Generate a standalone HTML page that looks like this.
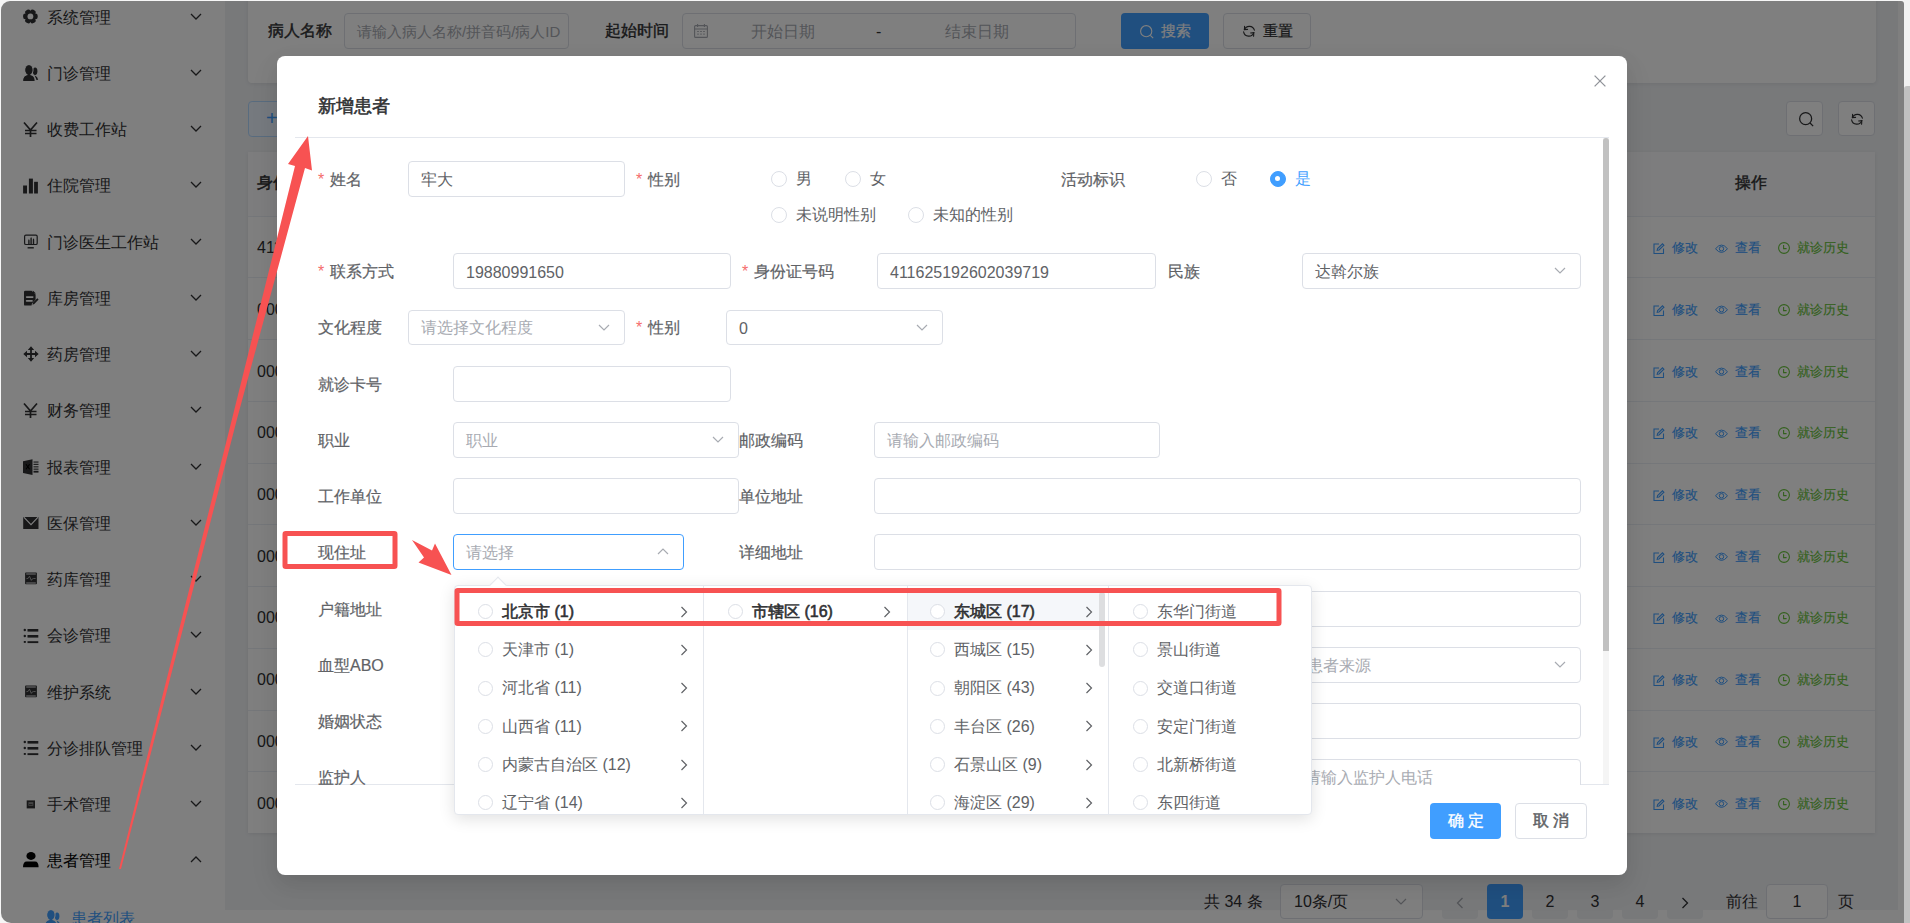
<!DOCTYPE html><html><head><meta charset="utf-8"><style>
*{box-sizing:border-box;margin:0;padding:0}
html,body{width:1910px;height:923px;overflow:hidden;background:#f3f3f3;font-family:"Liberation Sans",sans-serif;color:#303133}
.ab{position:absolute}
#win{position:absolute;left:0;top:0;width:1904px;height:923px;overflow:hidden;background:#f0f2f5}
.frame{position:absolute;left:1px;top:1px;width:1903px;height:922px;border-radius:9px 3px 0 10px;box-shadow:0 0 0 30px #f6f6f6;pointer-events:none}
.side{position:absolute;left:0;top:0;width:225px;height:923px;background:#fff}
.mi{position:absolute;left:0;width:224px;height:56px;font-size:16px;line-height:56px;color:#303133}
.mi .ic{position:absolute;left:22px;top:20px;width:16px;height:16px}
.mi .tx{position:absolute;left:47px;top:.5px}
.mi .ch{position:absolute;left:190px;top:23px;width:12px;height:10px}
.card{position:absolute;background:#fff;border-radius:4px;box-shadow:0 1px 4px rgba(0,0,0,.08)}
.lbl{position:absolute;font-size:16px;line-height:20px;color:#606266;font-weight:400;-webkit-text-stroke:.2px currentColor;white-space:nowrap}
.inp{position:absolute;border:1px solid #dcdfe6;border-radius:4px;background:#fff;font-size:16px;color:#606266;white-space:nowrap;overflow:hidden}
.inp span{position:absolute;left:12px;top:50%;transform:translateY(-50%);line-height:20px;margin-top:.6px}
.ph{color:#a8abb2}
.req{color:#f56c6c;margin-right:6px;-webkit-text-stroke:0}
.row{position:absolute;left:248px;width:1627px;border-top:1px solid #ebeef5;background:#fff}
.radio{position:absolute;width:16px;height:16px;border:1px solid #dcdfe6;border-radius:50%;background:#fff}
.rl{position:absolute;font-size:16px;line-height:20px;color:#606266;white-space:nowrap}
.cn{position:absolute;height:38px;font-size:16px;line-height:38px;color:#606266;white-space:nowrap}
</style></head><body>
<div id="win">
<div class="side">
<div class="mi" style="top:-11px;color:#303133">
<svg class="ab" style="left:23px;top:19.4px" width="16" height="16" viewBox="0 0 16 16"><g transform="translate(-0.6 0.4)"><g fill="#303133"><rect x="5.2" y="0.7" width="5.6" height="14.6" rx="2.2" transform="rotate(30 8 8)"/><rect x="5.2" y="0.7" width="5.6" height="14.6" rx="2.2" transform="rotate(90 8 8)"/><rect x="5.2" y="0.7" width="5.6" height="14.6" rx="2.2" transform="rotate(150 8 8)"/><circle cx="8" cy="8" r="5.2"/></g><circle cx="8" cy="8" r="2.9" fill="#fff"/></g></svg>
<div class="tx">系统管理</div>
<svg class="ch" viewBox="0 0 12 10"><path d="M1 2 L6 7 L11 2" fill="none" stroke="#303133" stroke-width="1.3"/></svg>
</div>
<div class="mi" style="top:45px;color:#303133">
<svg class="ab" style="left:23px;top:20.0px" width="16" height="16" viewBox="0 0 16 16"><g fill="#303133"><ellipse cx="12.1" cy="6.3" rx="2.3" ry="3.7"/><path d="M11.5 10.2 Q14.6 11.5 15.2 14.8 L13.5 15 Z"/></g><g fill="#303133" stroke="#fff" stroke-width="1.3"><path d="M-0.3 16.2 Q-0.3 10 5.9 9.6 Q12.1 10 12.1 16.2 Z"/><ellipse cx="5.9" cy="4.9" rx="4" ry="5"/></g><g fill="#303133"><path d="M0.2 15.9 Q0.2 10.4 5.9 10.1 Q11.6 10.4 11.6 15.9 Z"/><ellipse cx="5.9" cy="4.9" rx="3.6" ry="4.7"/><rect x="4.5" y="8" width="2.8" height="3"/></g></svg>
<div class="tx">门诊管理</div>
<svg class="ch" viewBox="0 0 12 10"><path d="M1 2 L6 7 L11 2" fill="none" stroke="#303133" stroke-width="1.3"/></svg>
</div>
<div class="mi" style="top:101px;color:#303133">
<svg class="ab" style="left:23px;top:19.5px" width="16" height="16" viewBox="0 0 16 16"><path d="M1 1.5 L7.5 9 L14 1.5 M7.5 9 V16 M2 9.5 H13.5 M2 12.5 H13.5" fill="none" stroke="#303133" stroke-width="1.7"/></svg>
<div class="tx">收费工作站</div>
<svg class="ch" viewBox="0 0 12 10"><path d="M1 2 L6 7 L11 2" fill="none" stroke="#303133" stroke-width="1.3"/></svg>
</div>
<div class="mi" style="top:157px;color:#303133">
<svg class="ab" style="left:23px;top:20.5px" width="16" height="16" viewBox="0 0 16 16"><g fill="#303133"><rect x="0.1" y="7.5" width="3.9" height="8"/><rect x="5.9" y="0.6" width="4" height="14.9"/><rect x="11.1" y="3.8" width="3.8" height="11.7"/></g></svg>
<div class="tx">住院管理</div>
<svg class="ch" viewBox="0 0 12 10"><path d="M1 2 L6 7 L11 2" fill="none" stroke="#303133" stroke-width="1.3"/></svg>
</div>
<div class="mi" style="top:214px;color:#303133">
<svg class="ab" style="left:23px;top:19.7px" width="16" height="16" viewBox="0 0 16 16"><g fill="none" stroke="#303133" stroke-width="1.2"><rect x="1.6" y="1.1" width="12.6" height="9.4" rx="1.3"/><path d="M4.6 13.8 H10.8" stroke-width="1.4"/></g><g fill="#303133"><path d="M5.2 10.2 V6.5 L5.9 5 L6.6 6.5 V10.2Z M7.4 10.2 V4.2 L8.1 3 L8.8 4.2 V10.2Z M9.8 10.2 V5.5 L10.5 4.2 L11.2 5.5 V10.2Z"/></g></svg>
<div class="tx">门诊医生工作站</div>
<svg class="ch" viewBox="0 0 12 10"><path d="M1 2 L6 7 L11 2" fill="none" stroke="#303133" stroke-width="1.3"/></svg>
</div>
<div class="mi" style="top:270px;color:#303133">
<svg class="ab" style="left:23px;top:19.5px" width="16" height="16" viewBox="0 0 16 16"><g fill="#303133"><path d="M1 2 Q1 0.8 2.2 0.8 L8.6 0.8 L12.6 4.6 L12.6 9.6 L9 13.5 L8.5 15.6 L2.2 15.6 Q1 15.6 1 14.4 Z"/><path d="M9.8 0.5 L13 3.6 L9.8 3.6 Z"/><path d="M9.5 14.8 L10 12.6 L14.3 8.3 L15.6 9.6 L11.3 13.9 Z"/></g><g fill="#fff"><rect x="2.8" y="6.2" width="7.8" height="1.7" rx=".8"/><rect x="2.8" y="10" width="7" height="1.7" rx=".8"/></g></svg>
<div class="tx">库房管理</div>
<svg class="ch" viewBox="0 0 12 10"><path d="M1 2 L6 7 L11 2" fill="none" stroke="#303133" stroke-width="1.3"/></svg>
</div>
<div class="mi" style="top:326px;color:#303133">
<svg class="ab" style="left:23px;top:19.6px" width="16" height="16" viewBox="0 0 16 16"><g fill="#303133"><path d="M8 0.3 L11.2 4 L8.9 4 L8.9 7.1 L12 7.1 L12 4.8 L15.7 8 L12 11.2 L12 8.9 L8.9 8.9 L8.9 12 L11.2 12 L8 15.7 L4.8 12 L7.1 12 L7.1 8.9 L4 8.9 L4 11.2 L0.3 8 L4 4.8 L4 7.1 L7.1 7.1 L7.1 4 L4.8 4 Z"/></g></svg>
<div class="tx">药房管理</div>
<svg class="ch" viewBox="0 0 12 10"><path d="M1 2 L6 7 L11 2" fill="none" stroke="#303133" stroke-width="1.3"/></svg>
</div>
<div class="mi" style="top:382px;color:#303133">
<svg class="ab" style="left:23px;top:20.0px" width="16" height="16" viewBox="0 0 16 16"><path d="M1 1.5 L7.5 9 L14 1.5 M7.5 9 V16 M2 9.5 H13.5 M2 12.5 H13.5" fill="none" stroke="#303133" stroke-width="1.7"/></svg>
<div class="tx">财务管理</div>
<svg class="ch" viewBox="0 0 12 10"><path d="M1 2 L6 7 L11 2" fill="none" stroke="#303133" stroke-width="1.3"/></svg>
</div>
<div class="mi" style="top:439px;color:#303133">
<svg class="ab" style="left:23px;top:19.8px" width="16" height="16" viewBox="0 0 16 16"><g fill="#303133"><path d="M0 2.2 L9.5 0.2 L9.5 16 L0 14 Z"/><rect x="10.5" y="2.5" width="5" height="1.1"/><rect x="10.5" y="4.8" width="5" height="1.1"/><rect x="10.5" y="7.3" width="5" height="1.1"/><rect x="10.5" y="9.6" width="5" height="1.1"/><rect x="10.5" y="11.8" width="5" height="1.8"/></g><path d="M3 5.2 L6.6 10.2 M6.6 5.2 L3 10.2" stroke="#000" stroke-width="1.1"/></svg>
<div class="tx">报表管理</div>
<svg class="ch" viewBox="0 0 12 10"><path d="M1 2 L6 7 L11 2" fill="none" stroke="#303133" stroke-width="1.3"/></svg>
</div>
<div class="mi" style="top:495px;color:#303133">
<svg class="ab" style="left:23px;top:19.8px" width="16" height="16" viewBox="0 0 16 16"><path d="M0.2 2 L15.5 2 L15.5 14 L0.2 14 Z" fill="#303133"/><path d="M0.8 2.2 L8 9.6 L15.1 2.2" fill="none" stroke="#fff" stroke-width="1.1"/></svg>
<div class="tx">医保管理</div>
<svg class="ch" viewBox="0 0 12 10"><path d="M1 2 L6 7 L11 2" fill="none" stroke="#303133" stroke-width="1.3"/></svg>
</div>
<div class="mi" style="top:551px;color:#303133">
<svg class="ab" style="left:23px;top:19.9px" width="16" height="16" viewBox="0 0 16 16"><rect x="2.1" y="1.6" width="11.8" height="11.7" rx="0.8" fill="#303133"/><g fill="none" stroke="#fff" stroke-width=".9"><path d="M3.2 3 H12.8 M3.2 12 H12.8"/><path d="M3.4 7.7 L5.2 7.3 L6.5 5.2 L8.3 9.4 L9.2 8 L10.5 7.5 L12.6 7.5" stroke="#aaa"/></g></svg>
<div class="tx">药库管理</div>
<svg class="ch" viewBox="0 0 12 10"><path d="M1 2 L6 7 L11 2" fill="none" stroke="#303133" stroke-width="1.3"/></svg>
</div>
<div class="mi" style="top:607px;color:#303133">
<svg class="ab" style="left:23px;top:20.5px" width="16" height="16" viewBox="0 0 16 16"><g fill="#303133"><circle cx="1.8" cy="2" r="1.2"/><circle cx="1.8" cy="8" r="1.2"/><rect x="0.8" y="13" width="2" height="1.9"/><rect x="4.5" y="1" width="10.8" height="2.6"/><rect x="4.5" y="7" width="10.8" height="2.6"/><rect x="4.5" y="13.2" width="10.8" height="1.9"/></g></svg>
<div class="tx">会诊管理</div>
<svg class="ch" viewBox="0 0 12 10"><path d="M1 2 L6 7 L11 2" fill="none" stroke="#303133" stroke-width="1.3"/></svg>
</div>
<div class="mi" style="top:664px;color:#303133">
<svg class="ab" style="left:23px;top:19.5px" width="16" height="16" viewBox="0 0 16 16"><rect x="2.1" y="1.6" width="11.8" height="11.7" rx="0.8" fill="#303133"/><g fill="none" stroke="#fff" stroke-width=".9"><path d="M3.2 3 H12.8 M3.2 12 H12.8"/><path d="M3.4 7.7 L5.2 7.3 L6.5 5.2 L8.3 9.4 L9.2 8 L10.5 7.5 L12.6 7.5" stroke="#aaa"/></g></svg>
<div class="tx">维护系统</div>
<svg class="ch" viewBox="0 0 12 10"><path d="M1 2 L6 7 L11 2" fill="none" stroke="#303133" stroke-width="1.3"/></svg>
</div>
<div class="mi" style="top:720px;color:#303133">
<svg class="ab" style="left:23px;top:20.0px" width="16" height="16" viewBox="0 0 16 16"><g fill="#303133"><circle cx="1.8" cy="2" r="1.2"/><circle cx="1.8" cy="8" r="1.2"/><rect x="0.8" y="13" width="2" height="1.9"/><rect x="4.5" y="1" width="10.8" height="2.6"/><rect x="4.5" y="7" width="10.8" height="2.6"/><rect x="4.5" y="13.2" width="10.8" height="1.9"/></g></svg>
<div class="tx">分诊排队管理</div>
<svg class="ch" viewBox="0 0 12 10"><path d="M1 2 L6 7 L11 2" fill="none" stroke="#303133" stroke-width="1.3"/></svg>
</div>
<div class="mi" style="top:776px;color:#303133">
<svg class="ab" style="left:23px;top:19.9px" width="16" height="16" viewBox="0 0 16 16"><rect x="3.7" y="4.4" width="8.3" height="8" fill="#303133"/><rect x="5.4" y="6.1" width="4.9" height="3.7" fill="#888"/><rect x="6" y="8" width="3.5" height="1" fill="#444"/></svg>
<div class="tx">手术管理</div>
<svg class="ch" viewBox="0 0 12 10"><path d="M1 2 L6 7 L11 2" fill="none" stroke="#303133" stroke-width="1.3"/></svg>
</div>
<div class="mi" style="top:832px;color:#000">
<svg class="ab" style="left:23px;top:20.4px" width="16" height="16" viewBox="0 0 16 16"><g fill="#000"><ellipse cx="8" cy="4" rx="4.6" ry="3.9"/><path d="M0 15.2 Q0 9.6 3.8 9.6 L12 9.6 Q15.6 9.6 15.6 15.2 Z"/></g></svg>
<div class="tx">患者管理</div>
<svg class="ch" viewBox="0 0 12 10"><path d="M1 7 L6 2 L11 7" fill="none" stroke="#303133" stroke-width="1.3"/></svg>
</div>
<div class="mi" style="top:890px;color:#409eff"><svg class="ab" style="left:45px;top:19.5px" width="16" height="16" viewBox="0 0 16 16"><g fill="#409eff"><ellipse cx="12.1" cy="6.3" rx="2.3" ry="3.7"/><path d="M11.5 10.2 Q14.6 11.5 15.2 14.8 L13.5 15 Z"/></g><g fill="#409eff" stroke="#fff" stroke-width="1.3"><path d="M-0.3 16.2 Q-0.3 10 5.9 9.6 Q12.1 10 12.1 16.2 Z"/><ellipse cx="5.9" cy="4.9" rx="4" ry="5"/></g><g fill="#409eff"><path d="M0.2 15.9 Q0.2 10.4 5.9 10.1 Q11.6 10.4 11.6 15.9 Z"/><ellipse cx="5.9" cy="4.9" rx="3.6" ry="4.7"/><rect x="4.5" y="8" width="2.8" height="3"/></g></svg><div class="tx" style="left:70.5px">患者列表</div></div>
</div>
<div class="card" style="left:248px;top:-20px;width:1628px;height:103px"></div>
<div class="lbl" style="left:268px;top:21px;color:#303133;-webkit-text-stroke:.4px currentColor">病人名称</div>
<div class="inp" style="left:344px;top:13px;width:225px;height:36px"><span class="ph" style="font-size:15px">请输入病人名称/拼音码/病人ID</span></div>
<div class="lbl" style="left:605px;top:21px;color:#303133;-webkit-text-stroke:.4px currentColor">起始时间</div>
<div class="inp" style="left:682px;top:13px;width:394px;height:36px"><span class="ph" style="left:68px">开始日期</span><span style="left:193px;color:#303133">-</span><span class="ph" style="left:262px">结束日期</span></div>
<svg class="ab" style="left:694px;top:24px" width="14" height="14" viewBox="0 0 14 14"><g fill="none" stroke="#a8abb2" stroke-width="1.1"><rect x="0.6" y="1.6" width="12.8" height="11.8" rx="1"/><path d="M0.6 5 H13.4 M3.6 0 V3 M10.4 0 V3"/></g><g fill="#a8abb2"><rect x="3.2" y="7" width="1.6" height="1"/><rect x="6.2" y="7" width="1.6" height="1"/><rect x="9.2" y="7" width="1.6" height="1"/><rect x="3.2" y="9.6" width="1.6" height="1"/><rect x="6.2" y="9.6" width="1.6" height="1"/><rect x="9.2" y="9.6" width="1.6" height="1"/></g></svg>
<div class="ab" style="left:1121px;top:13px;width:88px;height:36px;background:#409eff;border-radius:4px;color:#fff;font-size:15px;line-height:36px;padding-left:40px;-webkit-text-stroke:.2px currentColor;">搜索</div>
<svg class="ab" style="left:1140px;top:24.5px" width="14" height="14" viewBox="0 0 14 14"><g fill="none" stroke="#fff" stroke-width="1.1"><circle cx="6.2" cy="6.2" r="5.6"/><path d="M10.3 10.3 L13.2 13.2"/></g></svg>
<div class="ab" style="left:1223px;top:13px;width:88px;height:36px;background:#fff;border:1px solid #dcdfe6;border-radius:4px;color:#303133;font-size:15px;line-height:34px;padding-left:39px;-webkit-text-stroke:.2px currentColor;">重置</div>
<svg class="ab" style="left:1243px;top:25px" width="12" height="12" viewBox="0 0 12 12"><g fill="none" stroke="#303133" stroke-width="1.1" stroke-linecap="round"><path d="M1.4 4.6 A5.3 5.3 0 0 1 11.4 5.2"/><path d="M10.8 7.6 A5.3 5.3 0 0 1 0.6 6.8"/><path d="M1.6 1.2 L1.4 4.6 L4.6 4.4"/><path d="M10.6 11.2 L10.8 7.6 L7.6 8"/></g></svg>
<div class="ab" style="left:248px;top:101px;width:90px;height:36px;background:#ecf5ff;border:1px solid #b3d8ff;border-radius:4px;color:#409eff;font-size:20px;line-height:32px;padding-left:17px">+</div>
<div class="ab" style="left:1786px;top:101px;width:37px;height:35px;background:#fff;border:1px solid #dcdfe6;border-radius:4px"></div>
<svg class="ab" style="left:1798.5px;top:111.5px" width="15" height="15" viewBox="0 0 14 14"><g fill="none" stroke="#303133" stroke-width="1.2"><circle cx="6.2" cy="6.2" r="5.6"/><path d="M10.3 10.3 L13.2 13.2"/></g></svg>
<div class="ab" style="left:1838px;top:101px;width:37px;height:35px;background:#fff;border:1px solid #dcdfe6;border-radius:4px"></div>
<svg class="ab" style="left:1851px;top:113px" width="12" height="12" viewBox="0 0 12 12"><g fill="none" stroke="#303133" stroke-width="1.1" stroke-linecap="round"><path d="M1.4 4.6 A5.3 5.3 0 0 1 11.4 5.2"/><path d="M10.8 7.6 A5.3 5.3 0 0 1 0.6 6.8"/><path d="M1.6 1.2 L1.4 4.6 L4.6 4.4"/><path d="M10.6 11.2 L10.8 7.6 L7.6 8"/></g></svg>
<div class="card" style="left:248px;top:152px;width:1627px;height:681px;border-radius:0"></div>
<div class="ab" style="left:248px;top:152px;width:1627px;height:65px;background:#fbfbfc"></div>
<div class="lbl" style="left:257px;top:173px;color:#303133;-webkit-text-stroke:.5px currentColor">身份证号</div>
<div class="lbl" style="left:1735px;top:173px;color:#303133;-webkit-text-stroke:.4px currentColor">操作</div>
<div class="row" style="top:215.7px;height:61.7px"></div>
<div class="lbl" style="left:257px;top:238.1px;color:#303133;-webkit-text-stroke:0">411625192602039719</div>
<svg class="ab" style="left:1653px;top:243.1px" width="11.5" height="11" viewBox="0 0 11.5 11"><g fill="none" stroke="#409eff" stroke-width="1.1"><path d="M6 1 H1 V10.5 H10.5 V5.5"/><path d="M4.2 7.3 L4.6 5.6 L9.5 0.8 L10.9 2.2 L6 7 Z"/></g></svg>
<div class="lbl" style="left:1672px;top:238.1px;color:#409eff;font-size:13.3px;-webkit-text-stroke:.15px currentColor">修改</div>
<svg class="ab" style="left:1715px;top:243.6px" width="13" height="9.5" viewBox="0 0 13 9.5"><g fill="none" stroke="#409eff" stroke-width="1"><path d="M0.5 4.75 Q6.5 -2.6 12.5 4.75 Q6.5 12.1 0.5 4.75 Z"/><circle cx="6.5" cy="4.75" r="2.2"/></g></svg>
<div class="lbl" style="left:1735px;top:238.1px;color:#409eff;font-size:13.3px;-webkit-text-stroke:.15px currentColor">查看</div>
<svg class="ab" style="left:1778px;top:242.1px" width="12" height="12" viewBox="0 0 12 12"><g fill="none" stroke="#67c23a" stroke-width="1.1"><circle cx="6" cy="6" r="5.4"/><path d="M5.6 3 V6.6 H8.6"/></g></svg>
<div class="lbl" style="left:1797px;top:238.1px;color:#67c23a;font-size:13.3px;-webkit-text-stroke:.15px currentColor">就诊历史</div>
<div class="row" style="top:277.4px;height:61.7px"></div>
<div class="lbl" style="left:257px;top:299.8px;color:#303133;-webkit-text-stroke:0">000000000000000000</div>
<svg class="ab" style="left:1653px;top:304.8px" width="11.5" height="11" viewBox="0 0 11.5 11"><g fill="none" stroke="#409eff" stroke-width="1.1"><path d="M6 1 H1 V10.5 H10.5 V5.5"/><path d="M4.2 7.3 L4.6 5.6 L9.5 0.8 L10.9 2.2 L6 7 Z"/></g></svg>
<div class="lbl" style="left:1672px;top:299.8px;color:#409eff;font-size:13.3px;-webkit-text-stroke:.15px currentColor">修改</div>
<svg class="ab" style="left:1715px;top:305.3px" width="13" height="9.5" viewBox="0 0 13 9.5"><g fill="none" stroke="#409eff" stroke-width="1"><path d="M0.5 4.75 Q6.5 -2.6 12.5 4.75 Q6.5 12.1 0.5 4.75 Z"/><circle cx="6.5" cy="4.75" r="2.2"/></g></svg>
<div class="lbl" style="left:1735px;top:299.8px;color:#409eff;font-size:13.3px;-webkit-text-stroke:.15px currentColor">查看</div>
<svg class="ab" style="left:1778px;top:303.8px" width="12" height="12" viewBox="0 0 12 12"><g fill="none" stroke="#67c23a" stroke-width="1.1"><circle cx="6" cy="6" r="5.4"/><path d="M5.6 3 V6.6 H8.6"/></g></svg>
<div class="lbl" style="left:1797px;top:299.8px;color:#67c23a;font-size:13.3px;-webkit-text-stroke:.15px currentColor">就诊历史</div>
<div class="row" style="top:339.1px;height:61.7px"></div>
<div class="lbl" style="left:257px;top:361.5px;color:#303133;-webkit-text-stroke:0">000000000000000000</div>
<svg class="ab" style="left:1653px;top:366.5px" width="11.5" height="11" viewBox="0 0 11.5 11"><g fill="none" stroke="#409eff" stroke-width="1.1"><path d="M6 1 H1 V10.5 H10.5 V5.5"/><path d="M4.2 7.3 L4.6 5.6 L9.5 0.8 L10.9 2.2 L6 7 Z"/></g></svg>
<div class="lbl" style="left:1672px;top:361.5px;color:#409eff;font-size:13.3px;-webkit-text-stroke:.15px currentColor">修改</div>
<svg class="ab" style="left:1715px;top:367.0px" width="13" height="9.5" viewBox="0 0 13 9.5"><g fill="none" stroke="#409eff" stroke-width="1"><path d="M0.5 4.75 Q6.5 -2.6 12.5 4.75 Q6.5 12.1 0.5 4.75 Z"/><circle cx="6.5" cy="4.75" r="2.2"/></g></svg>
<div class="lbl" style="left:1735px;top:361.5px;color:#409eff;font-size:13.3px;-webkit-text-stroke:.15px currentColor">查看</div>
<svg class="ab" style="left:1778px;top:365.5px" width="12" height="12" viewBox="0 0 12 12"><g fill="none" stroke="#67c23a" stroke-width="1.1"><circle cx="6" cy="6" r="5.4"/><path d="M5.6 3 V6.6 H8.6"/></g></svg>
<div class="lbl" style="left:1797px;top:361.5px;color:#67c23a;font-size:13.3px;-webkit-text-stroke:.15px currentColor">就诊历史</div>
<div class="row" style="top:400.9px;height:61.7px"></div>
<div class="lbl" style="left:257px;top:423.3px;color:#303133;-webkit-text-stroke:0">000000000000000000</div>
<svg class="ab" style="left:1653px;top:428.3px" width="11.5" height="11" viewBox="0 0 11.5 11"><g fill="none" stroke="#409eff" stroke-width="1.1"><path d="M6 1 H1 V10.5 H10.5 V5.5"/><path d="M4.2 7.3 L4.6 5.6 L9.5 0.8 L10.9 2.2 L6 7 Z"/></g></svg>
<div class="lbl" style="left:1672px;top:423.3px;color:#409eff;font-size:13.3px;-webkit-text-stroke:.15px currentColor">修改</div>
<svg class="ab" style="left:1715px;top:428.8px" width="13" height="9.5" viewBox="0 0 13 9.5"><g fill="none" stroke="#409eff" stroke-width="1"><path d="M0.5 4.75 Q6.5 -2.6 12.5 4.75 Q6.5 12.1 0.5 4.75 Z"/><circle cx="6.5" cy="4.75" r="2.2"/></g></svg>
<div class="lbl" style="left:1735px;top:423.3px;color:#409eff;font-size:13.3px;-webkit-text-stroke:.15px currentColor">查看</div>
<svg class="ab" style="left:1778px;top:427.3px" width="12" height="12" viewBox="0 0 12 12"><g fill="none" stroke="#67c23a" stroke-width="1.1"><circle cx="6" cy="6" r="5.4"/><path d="M5.6 3 V6.6 H8.6"/></g></svg>
<div class="lbl" style="left:1797px;top:423.3px;color:#67c23a;font-size:13.3px;-webkit-text-stroke:.15px currentColor">就诊历史</div>
<div class="row" style="top:462.6px;height:61.7px"></div>
<div class="lbl" style="left:257px;top:485.0px;color:#303133;-webkit-text-stroke:0">000000000000000000</div>
<svg class="ab" style="left:1653px;top:490.0px" width="11.5" height="11" viewBox="0 0 11.5 11"><g fill="none" stroke="#409eff" stroke-width="1.1"><path d="M6 1 H1 V10.5 H10.5 V5.5"/><path d="M4.2 7.3 L4.6 5.6 L9.5 0.8 L10.9 2.2 L6 7 Z"/></g></svg>
<div class="lbl" style="left:1672px;top:485.0px;color:#409eff;font-size:13.3px;-webkit-text-stroke:.15px currentColor">修改</div>
<svg class="ab" style="left:1715px;top:490.5px" width="13" height="9.5" viewBox="0 0 13 9.5"><g fill="none" stroke="#409eff" stroke-width="1"><path d="M0.5 4.75 Q6.5 -2.6 12.5 4.75 Q6.5 12.1 0.5 4.75 Z"/><circle cx="6.5" cy="4.75" r="2.2"/></g></svg>
<div class="lbl" style="left:1735px;top:485.0px;color:#409eff;font-size:13.3px;-webkit-text-stroke:.15px currentColor">查看</div>
<svg class="ab" style="left:1778px;top:489.0px" width="12" height="12" viewBox="0 0 12 12"><g fill="none" stroke="#67c23a" stroke-width="1.1"><circle cx="6" cy="6" r="5.4"/><path d="M5.6 3 V6.6 H8.6"/></g></svg>
<div class="lbl" style="left:1797px;top:485.0px;color:#67c23a;font-size:13.3px;-webkit-text-stroke:.15px currentColor">就诊历史</div>
<div class="row" style="top:524.3px;height:61.7px"></div>
<div class="lbl" style="left:257px;top:546.7px;color:#303133;-webkit-text-stroke:0">000000000000000000</div>
<svg class="ab" style="left:1653px;top:551.7px" width="11.5" height="11" viewBox="0 0 11.5 11"><g fill="none" stroke="#409eff" stroke-width="1.1"><path d="M6 1 H1 V10.5 H10.5 V5.5"/><path d="M4.2 7.3 L4.6 5.6 L9.5 0.8 L10.9 2.2 L6 7 Z"/></g></svg>
<div class="lbl" style="left:1672px;top:546.7px;color:#409eff;font-size:13.3px;-webkit-text-stroke:.15px currentColor">修改</div>
<svg class="ab" style="left:1715px;top:552.2px" width="13" height="9.5" viewBox="0 0 13 9.5"><g fill="none" stroke="#409eff" stroke-width="1"><path d="M0.5 4.75 Q6.5 -2.6 12.5 4.75 Q6.5 12.1 0.5 4.75 Z"/><circle cx="6.5" cy="4.75" r="2.2"/></g></svg>
<div class="lbl" style="left:1735px;top:546.7px;color:#409eff;font-size:13.3px;-webkit-text-stroke:.15px currentColor">查看</div>
<svg class="ab" style="left:1778px;top:550.7px" width="12" height="12" viewBox="0 0 12 12"><g fill="none" stroke="#67c23a" stroke-width="1.1"><circle cx="6" cy="6" r="5.4"/><path d="M5.6 3 V6.6 H8.6"/></g></svg>
<div class="lbl" style="left:1797px;top:546.7px;color:#67c23a;font-size:13.3px;-webkit-text-stroke:.15px currentColor">就诊历史</div>
<div class="row" style="top:586.0px;height:61.7px"></div>
<div class="lbl" style="left:257px;top:608.4px;color:#303133;-webkit-text-stroke:0">000000000000000000</div>
<svg class="ab" style="left:1653px;top:613.4px" width="11.5" height="11" viewBox="0 0 11.5 11"><g fill="none" stroke="#409eff" stroke-width="1.1"><path d="M6 1 H1 V10.5 H10.5 V5.5"/><path d="M4.2 7.3 L4.6 5.6 L9.5 0.8 L10.9 2.2 L6 7 Z"/></g></svg>
<div class="lbl" style="left:1672px;top:608.4px;color:#409eff;font-size:13.3px;-webkit-text-stroke:.15px currentColor">修改</div>
<svg class="ab" style="left:1715px;top:613.9px" width="13" height="9.5" viewBox="0 0 13 9.5"><g fill="none" stroke="#409eff" stroke-width="1"><path d="M0.5 4.75 Q6.5 -2.6 12.5 4.75 Q6.5 12.1 0.5 4.75 Z"/><circle cx="6.5" cy="4.75" r="2.2"/></g></svg>
<div class="lbl" style="left:1735px;top:608.4px;color:#409eff;font-size:13.3px;-webkit-text-stroke:.15px currentColor">查看</div>
<svg class="ab" style="left:1778px;top:612.4px" width="12" height="12" viewBox="0 0 12 12"><g fill="none" stroke="#67c23a" stroke-width="1.1"><circle cx="6" cy="6" r="5.4"/><path d="M5.6 3 V6.6 H8.6"/></g></svg>
<div class="lbl" style="left:1797px;top:608.4px;color:#67c23a;font-size:13.3px;-webkit-text-stroke:.15px currentColor">就诊历史</div>
<div class="row" style="top:647.7px;height:61.7px"></div>
<div class="lbl" style="left:257px;top:670.1px;color:#303133;-webkit-text-stroke:0">000000000000000000</div>
<svg class="ab" style="left:1653px;top:675.1px" width="11.5" height="11" viewBox="0 0 11.5 11"><g fill="none" stroke="#409eff" stroke-width="1.1"><path d="M6 1 H1 V10.5 H10.5 V5.5"/><path d="M4.2 7.3 L4.6 5.6 L9.5 0.8 L10.9 2.2 L6 7 Z"/></g></svg>
<div class="lbl" style="left:1672px;top:670.1px;color:#409eff;font-size:13.3px;-webkit-text-stroke:.15px currentColor">修改</div>
<svg class="ab" style="left:1715px;top:675.6px" width="13" height="9.5" viewBox="0 0 13 9.5"><g fill="none" stroke="#409eff" stroke-width="1"><path d="M0.5 4.75 Q6.5 -2.6 12.5 4.75 Q6.5 12.1 0.5 4.75 Z"/><circle cx="6.5" cy="4.75" r="2.2"/></g></svg>
<div class="lbl" style="left:1735px;top:670.1px;color:#409eff;font-size:13.3px;-webkit-text-stroke:.15px currentColor">查看</div>
<svg class="ab" style="left:1778px;top:674.1px" width="12" height="12" viewBox="0 0 12 12"><g fill="none" stroke="#67c23a" stroke-width="1.1"><circle cx="6" cy="6" r="5.4"/><path d="M5.6 3 V6.6 H8.6"/></g></svg>
<div class="lbl" style="left:1797px;top:670.1px;color:#67c23a;font-size:13.3px;-webkit-text-stroke:.15px currentColor">就诊历史</div>
<div class="row" style="top:709.5px;height:61.7px"></div>
<div class="lbl" style="left:257px;top:731.9px;color:#303133;-webkit-text-stroke:0">000000000000000000</div>
<svg class="ab" style="left:1653px;top:736.9px" width="11.5" height="11" viewBox="0 0 11.5 11"><g fill="none" stroke="#409eff" stroke-width="1.1"><path d="M6 1 H1 V10.5 H10.5 V5.5"/><path d="M4.2 7.3 L4.6 5.6 L9.5 0.8 L10.9 2.2 L6 7 Z"/></g></svg>
<div class="lbl" style="left:1672px;top:731.9px;color:#409eff;font-size:13.3px;-webkit-text-stroke:.15px currentColor">修改</div>
<svg class="ab" style="left:1715px;top:737.4px" width="13" height="9.5" viewBox="0 0 13 9.5"><g fill="none" stroke="#409eff" stroke-width="1"><path d="M0.5 4.75 Q6.5 -2.6 12.5 4.75 Q6.5 12.1 0.5 4.75 Z"/><circle cx="6.5" cy="4.75" r="2.2"/></g></svg>
<div class="lbl" style="left:1735px;top:731.9px;color:#409eff;font-size:13.3px;-webkit-text-stroke:.15px currentColor">查看</div>
<svg class="ab" style="left:1778px;top:735.9px" width="12" height="12" viewBox="0 0 12 12"><g fill="none" stroke="#67c23a" stroke-width="1.1"><circle cx="6" cy="6" r="5.4"/><path d="M5.6 3 V6.6 H8.6"/></g></svg>
<div class="lbl" style="left:1797px;top:731.9px;color:#67c23a;font-size:13.3px;-webkit-text-stroke:.15px currentColor">就诊历史</div>
<div class="row" style="top:771.2px;height:61.7px"></div>
<div class="lbl" style="left:257px;top:793.6px;color:#303133;-webkit-text-stroke:0">000000000000000000</div>
<svg class="ab" style="left:1653px;top:798.6px" width="11.5" height="11" viewBox="0 0 11.5 11"><g fill="none" stroke="#409eff" stroke-width="1.1"><path d="M6 1 H1 V10.5 H10.5 V5.5"/><path d="M4.2 7.3 L4.6 5.6 L9.5 0.8 L10.9 2.2 L6 7 Z"/></g></svg>
<div class="lbl" style="left:1672px;top:793.6px;color:#409eff;font-size:13.3px;-webkit-text-stroke:.15px currentColor">修改</div>
<svg class="ab" style="left:1715px;top:799.1px" width="13" height="9.5" viewBox="0 0 13 9.5"><g fill="none" stroke="#409eff" stroke-width="1"><path d="M0.5 4.75 Q6.5 -2.6 12.5 4.75 Q6.5 12.1 0.5 4.75 Z"/><circle cx="6.5" cy="4.75" r="2.2"/></g></svg>
<div class="lbl" style="left:1735px;top:793.6px;color:#409eff;font-size:13.3px;-webkit-text-stroke:.15px currentColor">查看</div>
<svg class="ab" style="left:1778px;top:797.6px" width="12" height="12" viewBox="0 0 12 12"><g fill="none" stroke="#67c23a" stroke-width="1.1"><circle cx="6" cy="6" r="5.4"/><path d="M5.6 3 V6.6 H8.6"/></g></svg>
<div class="lbl" style="left:1797px;top:793.6px;color:#67c23a;font-size:13.3px;-webkit-text-stroke:.15px currentColor">就诊历史</div>
<div class="ab" style="left:225px;top:910px;width:1679px;height:13px;background:#fff"></div>
<div class="lbl" style="left:1204px;top:892px;color:#303133;-webkit-text-stroke:0">共 34 条</div>
<div class="inp" style="left:1280px;top:884px;width:143px;height:35px"><span style="left:13px;color:#303133">10条/页</span><svg style="position:absolute;left:114px;top:13px" width="12" height="8" viewBox="0 0 12 8"><path d="M1 1 L6 6 L11 1" fill="none" stroke="#a8abb2" stroke-width="1.2"/></svg></div>
<div class="ab" style="left:1442px;top:884px;width:36px;height:35px;background:#f0f2f5;border-radius:4px"></div>
<div class="ab" style="left:1532px;top:884px;width:36px;height:35px;background:#f0f2f5;border-radius:4px"></div>
<div class="ab" style="left:1577px;top:884px;width:36px;height:35px;background:#f0f2f5;border-radius:4px"></div>
<div class="ab" style="left:1622px;top:884px;width:36px;height:35px;background:#f0f2f5;border-radius:4px"></div>
<div class="ab" style="left:1667px;top:884px;width:36px;height:35px;background:#f0f2f5;border-radius:4px"></div>
<svg class="ab" style="left:1456px;top:897px" width="8" height="12" viewBox="0 0 8 12"><path d="M6.5 1 L1.5 6 L6.5 11" fill="none" stroke="#a8abb2" stroke-width="1.3"/></svg>
<svg class="ab" style="left:1681px;top:897px" width="8" height="12" viewBox="0 0 8 12"><path d="M1.5 1 L6.5 6 L1.5 11" fill="none" stroke="#303133" stroke-width="1.3"/></svg>
<div class="ab" style="left:1487px;top:884px;width:36px;height:35px;background:#409eff;border-radius:4px;color:#fff;font-size:16px;line-height:35px;text-align:center;font-weight:700">1</div>
<div class="ab" style="left:1550px;top:884px;width:36px;height:35px;font-size:16px;line-height:35px;text-align:center;color:#303133;margin-left:-18px">2</div>
<div class="ab" style="left:1595px;top:884px;width:36px;height:35px;font-size:16px;line-height:35px;text-align:center;color:#303133;margin-left:-18px">3</div>
<div class="ab" style="left:1640px;top:884px;width:36px;height:35px;font-size:16px;line-height:35px;text-align:center;color:#303133;margin-left:-18px">4</div>
<div class="lbl" style="left:1726px;top:892px;color:#303133;-webkit-text-stroke:0">前往</div>
<div class="inp" style="left:1766px;top:884px;width:62px;height:35px"><span style="left:0;width:60px;text-align:center;color:#303133">1</span></div>
<div class="lbl" style="left:1838px;top:892px;color:#303133;-webkit-text-stroke:0">页</div>
<div class="ab" style="left:1898px;top:0;width:6px;height:923px;background:#fff"></div>
<div class="ab" style="left:0;top:0;right:0;bottom:0;background:rgba(0,0,0,.5)"></div>
<div class="ab" style="left:277px;top:56px;width:1350px;height:819px;background:#fff;border-radius:8px;box-shadow:0 12px 32px 4px rgba(0,0,0,.04),0 8px 20px rgba(0,0,0,.08)"></div>
<div class="frame"></div>
</div>
<div class="ab" style="left:318px;top:94.5px;font-size:18px;line-height:22px;font-weight:400;-webkit-text-stroke:.55px currentColor;color:#303133">新增患者</div>
<div class="ab" style="left:295px;top:137px;width:1314px;height:1px;background:#e4e7ed"></div>
<div class="ab" style="left:295px;top:784px;width:1314px;height:1px;background:#e4e7ed"></div>
<div class="ab" style="left:1603px;top:138px;width:6px;height:646px;background:#f5f5f5"></div>
<div class="ab" style="left:1603px;top:138px;width:6px;height:513px;background:#c1c1c1;border-radius:3px 3px 0 0"></div>
<div class="lbl" style="left:318px;top:169.5px"><span class="req">*</span>姓名</div>
<div class="inp" style="left:408px;top:161px;width:217px;height:36px"><span class="" style="">牢大</span></div>
<div class="lbl" style="left:636px;top:169.5px"><span class="req">*</span>性别</div>
<div class="radio" style="left:771px;top:171px"></div>
<div class="rl" style="left:796px;top:169px">男</div>
<div class="radio" style="left:845px;top:171px"></div>
<div class="rl" style="left:870px;top:169px">女</div>
<div class="lbl" style="left:1061px;top:169.5px">活动标识</div>
<div class="radio" style="left:1196px;top:171px"></div>
<div class="rl" style="left:1221px;top:169px">否</div>
<div class="radio" style="left:1270px;top:171px;background:#409eff;border-color:#409eff"><div style="position:absolute;left:4px;top:4px;width:5px;height:5px;border-radius:50%;background:#fff"></div></div>
<div class="rl" style="left:1295px;top:169px;color:#409eff">是</div>
<div class="radio" style="left:771px;top:207px"></div>
<div class="rl" style="left:796px;top:205px">未说明性别</div>
<div class="radio" style="left:908px;top:207px"></div>
<div class="rl" style="left:933px;top:205px">未知的性别</div>
<div class="lbl" style="left:318px;top:261.5px"><span class="req">*</span>联系方式</div>
<div class="inp" style="left:453px;top:253px;width:278px;height:36px"><span class="" style="margin-top:1.8px">19880991650</span></div>
<div class="lbl" style="left:742px;top:261.5px"><span class="req">*</span>身份证号码</div>
<div class="inp" style="left:877px;top:253px;width:279px;height:36px"><span class="" style="margin-top:1.8px">411625192602039719</span></div>
<div class="lbl" style="left:1168px;top:261.5px">民族</div>
<div class="inp" style="left:1302px;top:253px;width:279px;height:36px"><span class="" style="">达斡尔族</span><svg style="position:absolute;right:14px;top:50%;margin-top:-5px" width="12" height="10" viewBox="0 0 12 10"><path d="M1 2 L6 7 L11 2" fill="none" stroke="#a8abb2" stroke-width="1.2"/></svg></div>
<div class="lbl" style="left:318px;top:317.5px">文化程度</div>
<div class="inp" style="left:408px;top:310px;width:217px;height:35px"><span class="ph" style="">请选择文化程度</span><svg style="position:absolute;right:14px;top:50%;margin-top:-5px" width="12" height="10" viewBox="0 0 12 10"><path d="M1 2 L6 7 L11 2" fill="none" stroke="#a8abb2" stroke-width="1.2"/></svg></div>
<div class="lbl" style="left:636px;top:317.5px"><span class="req">*</span>性别</div>
<div class="inp" style="left:726px;top:310px;width:217px;height:35px"><span class="" style="margin-top:1.8px">0</span><svg style="position:absolute;right:14px;top:50%;margin-top:-5px" width="12" height="10" viewBox="0 0 12 10"><path d="M1 2 L6 7 L11 2" fill="none" stroke="#a8abb2" stroke-width="1.2"/></svg></div>
<div class="lbl" style="left:318px;top:374.5px">就诊卡号</div>
<div class="inp" style="left:453px;top:366px;width:278px;height:36px"></div>
<div class="lbl" style="left:318px;top:430.5px">职业</div>
<div class="inp" style="left:453px;top:422px;width:286px;height:36px"><span class="ph" style="">职业</span><svg style="position:absolute;right:14px;top:50%;margin-top:-5px" width="12" height="10" viewBox="0 0 12 10"><path d="M1 2 L6 7 L11 2" fill="none" stroke="#a8abb2" stroke-width="1.2"/></svg></div>
<div class="lbl" style="left:739px;top:430.5px">邮政编码</div>
<div class="inp" style="left:874px;top:422px;width:286px;height:36px"><span class="ph" style="">请输入邮政编码</span></div>
<div class="lbl" style="left:318px;top:486.5px">工作单位</div>
<div class="inp" style="left:453px;top:478px;width:286px;height:36px"></div>
<div class="lbl" style="left:739px;top:486.5px">单位地址</div>
<div class="inp" style="left:874px;top:478px;width:707px;height:36px"></div>
<div class="lbl" style="left:318px;top:542.5px">现住址</div>
<div class="inp" style="left:453px;top:534px;width:231px;height:36px;border-color:#409eff"><span class="ph">请选择</span><svg style="position:absolute;right:14px;top:50%;margin-top:-5px" width="12" height="10" viewBox="0 0 12 10"><path d="M1 7 L6 2 L11 7" fill="none" stroke="#a8abb2" stroke-width="1.2"/></svg></div>
<div class="lbl" style="left:739px;top:542.5px">详细地址</div>
<div class="inp" style="left:874px;top:534px;width:707px;height:36px"></div>
<div class="lbl" style="left:318px;top:599.5px">户籍地址</div>
<div class="inp" style="left:874px;top:591px;width:707px;height:36px"></div>
<div class="lbl" style="left:318px;top:655.5px">血型ABO</div>
<div class="inp" style="left:1246px;top:647px;width:335px;height:36px"><span class="ph" style="">请选择患者来源</span><svg style="position:absolute;right:14px;top:50%;margin-top:-5px" width="12" height="10" viewBox="0 0 12 10"><path d="M1 2 L6 7 L11 2" fill="none" stroke="#a8abb2" stroke-width="1.2"/></svg></div>
<div class="lbl" style="left:318px;top:711.5px">婚姻状态</div>
<div class="inp" style="left:1162px;top:703px;width:419px;height:36px"></div>
<div class="ab" style="left:295px;top:138px;width:1306px;height:646px;overflow:hidden">
</div>
<div class="lbl" style="left:318px;top:767.5px">监护人</div>
<div class="inp" style="left:1292px;top:759px;width:289px;height:36px"><span class="ph" style="">请输入监护人电话</span></div>
<div class="ab" style="left:295px;top:785px;width:1314px;height:10px;background:#fff"></div>
<div class="ab" style="left:318px;top:785px;width:100px;height:10px;background:#fff"></div>
<div class="ab" style="left:1430px;top:803px;width:71px;height:36px;background:#409eff;border-radius:4px;color:#fff;font-size:16px;line-height:36px;text-align:center;-webkit-text-stroke:.35px currentColor;letter-spacing:4px;padding-left:4px">确定</div>
<div class="ab" style="left:1515px;top:803px;width:72px;height:36px;background:#fff;border:1px solid #dcdfe6;border-radius:4px;color:#606266;font-size:16px;line-height:34px;text-align:center;-webkit-text-stroke:.5px currentColor;letter-spacing:4px;padding-left:4px">取消</div>
<svg class="ab" style="left:1594px;top:75px" width="12" height="12" viewBox="0 0 12 12"><path d="M0.6 0.6L11.4 11.4M11.4 0.6L0.6 11.4" stroke="#909399" stroke-width="1.3"/></svg>
<div class="ab" style="left:454px;top:585px;width:858px;height:230px;background:#fff;border:1px solid #e4e7ed;border-radius:4px;box-shadow:0 4px 16px rgba(0,0,0,.12)"></div>
<div class="ab" style="left:703px;top:586px;width:1px;height:228px;background:#e4e7ed"></div>
<div class="ab" style="left:907px;top:586px;width:1px;height:228px;background:#e4e7ed"></div>
<div class="ab" style="left:1108px;top:586px;width:1px;height:228px;background:#e4e7ed"></div>
<div class="ab" style="left:908px;top:592px;width:192px;height:38px;background:#f5f7fa"></div>
<div class="radio" style="left:478px;top:604.0px;width:15px;height:15px"></div>
<div class="cn" style="left:502px;top:592.9px;-webkit-text-stroke:.6px currentColor;color:#303133">北京市 (1)</div>
<svg class="ab" style="left:680px;top:605.5px" width="8" height="12" viewBox="0 0 8 12"><path d="M1.5 1L6.5 6L1.5 11" fill="none" stroke="#606266" stroke-width="1.2"/></svg>
<div class="radio" style="left:478px;top:642.2px;width:15px;height:15px"></div>
<div class="cn" style="left:502px;top:631.1px;">天津市 (1)</div>
<svg class="ab" style="left:680px;top:643.7px" width="8" height="12" viewBox="0 0 8 12"><path d="M1.5 1L6.5 6L1.5 11" fill="none" stroke="#606266" stroke-width="1.2"/></svg>
<div class="radio" style="left:478px;top:680.5px;width:15px;height:15px"></div>
<div class="cn" style="left:502px;top:669.4px;">河北省 (11)</div>
<svg class="ab" style="left:680px;top:682.0px" width="8" height="12" viewBox="0 0 8 12"><path d="M1.5 1L6.5 6L1.5 11" fill="none" stroke="#606266" stroke-width="1.2"/></svg>
<div class="radio" style="left:478px;top:718.8px;width:15px;height:15px"></div>
<div class="cn" style="left:502px;top:707.7px;">山西省 (11)</div>
<svg class="ab" style="left:680px;top:720.3px" width="8" height="12" viewBox="0 0 8 12"><path d="M1.5 1L6.5 6L1.5 11" fill="none" stroke="#606266" stroke-width="1.2"/></svg>
<div class="radio" style="left:478px;top:757.0px;width:15px;height:15px"></div>
<div class="cn" style="left:502px;top:745.9px;">内蒙古自治区 (12)</div>
<svg class="ab" style="left:680px;top:758.5px" width="8" height="12" viewBox="0 0 8 12"><path d="M1.5 1L6.5 6L1.5 11" fill="none" stroke="#606266" stroke-width="1.2"/></svg>
<div class="radio" style="left:478px;top:795.2px;width:15px;height:15px"></div>
<div class="cn" style="left:502px;top:784.1px;">辽宁省 (14)</div>
<svg class="ab" style="left:680px;top:796.7px" width="8" height="12" viewBox="0 0 8 12"><path d="M1.5 1L6.5 6L1.5 11" fill="none" stroke="#606266" stroke-width="1.2"/></svg>
<div class="radio" style="left:728px;top:604.0px;width:15px;height:15px"></div>
<div class="cn" style="left:752px;top:592.9px;-webkit-text-stroke:.6px currentColor;color:#303133">市辖区 (16)</div>
<svg class="ab" style="left:883px;top:605.5px" width="8" height="12" viewBox="0 0 8 12"><path d="M1.5 1L6.5 6L1.5 11" fill="none" stroke="#606266" stroke-width="1.2"/></svg>
<div class="radio" style="left:930px;top:604.0px;width:15px;height:15px"></div>
<div class="cn" style="left:954px;top:592.9px;-webkit-text-stroke:.6px currentColor;color:#303133">东城区 (17)</div>
<svg class="ab" style="left:1085px;top:605.5px" width="8" height="12" viewBox="0 0 8 12"><path d="M1.5 1L6.5 6L1.5 11" fill="none" stroke="#606266" stroke-width="1.2"/></svg>
<div class="radio" style="left:930px;top:642.2px;width:15px;height:15px"></div>
<div class="cn" style="left:954px;top:631.1px;">西城区 (15)</div>
<svg class="ab" style="left:1085px;top:643.7px" width="8" height="12" viewBox="0 0 8 12"><path d="M1.5 1L6.5 6L1.5 11" fill="none" stroke="#606266" stroke-width="1.2"/></svg>
<div class="radio" style="left:930px;top:680.5px;width:15px;height:15px"></div>
<div class="cn" style="left:954px;top:669.4px;">朝阳区 (43)</div>
<svg class="ab" style="left:1085px;top:682.0px" width="8" height="12" viewBox="0 0 8 12"><path d="M1.5 1L6.5 6L1.5 11" fill="none" stroke="#606266" stroke-width="1.2"/></svg>
<div class="radio" style="left:930px;top:718.8px;width:15px;height:15px"></div>
<div class="cn" style="left:954px;top:707.7px;">丰台区 (26)</div>
<svg class="ab" style="left:1085px;top:720.3px" width="8" height="12" viewBox="0 0 8 12"><path d="M1.5 1L6.5 6L1.5 11" fill="none" stroke="#606266" stroke-width="1.2"/></svg>
<div class="radio" style="left:930px;top:757.0px;width:15px;height:15px"></div>
<div class="cn" style="left:954px;top:745.9px;">石景山区 (9)</div>
<svg class="ab" style="left:1085px;top:758.5px" width="8" height="12" viewBox="0 0 8 12"><path d="M1.5 1L6.5 6L1.5 11" fill="none" stroke="#606266" stroke-width="1.2"/></svg>
<div class="radio" style="left:930px;top:795.2px;width:15px;height:15px"></div>
<div class="cn" style="left:954px;top:784.1px;">海淀区 (29)</div>
<svg class="ab" style="left:1085px;top:796.7px" width="8" height="12" viewBox="0 0 8 12"><path d="M1.5 1L6.5 6L1.5 11" fill="none" stroke="#606266" stroke-width="1.2"/></svg>
<div class="radio" style="left:1133px;top:604.0px;width:15px;height:15px"></div>
<div class="cn" style="left:1157px;top:592.9px;">东华门街道</div>
<div class="radio" style="left:1133px;top:642.2px;width:15px;height:15px"></div>
<div class="cn" style="left:1157px;top:631.1px;">景山街道</div>
<div class="radio" style="left:1133px;top:680.5px;width:15px;height:15px"></div>
<div class="cn" style="left:1157px;top:669.4px;">交道口街道</div>
<div class="radio" style="left:1133px;top:718.8px;width:15px;height:15px"></div>
<div class="cn" style="left:1157px;top:707.7px;">安定门街道</div>
<div class="radio" style="left:1133px;top:757.0px;width:15px;height:15px"></div>
<div class="cn" style="left:1157px;top:745.9px;">北新桥街道</div>
<div class="radio" style="left:1133px;top:795.2px;width:15px;height:15px"></div>
<div class="cn" style="left:1157px;top:784.1px;">东四街道</div>
<div class="ab" style="left:1099px;top:592px;width:6px;height:75px;background:#dddee0;border-radius:3px"></div>
<div class="ab" style="left:492px;top:579px;width:12px;height:12px;background:#fff;border-left:1px solid #e4e7ed;border-top:1px solid #e4e7ed;transform:rotate(45deg)"></div>
<div class="ab" style="left:1904px;top:0;width:6px;height:923px;background:#f1f1f1"></div>
<div class="ab" style="left:1904px;top:86px;width:6px;height:837px;background:#c1c1c1;border-radius:3px 0 0 0"></div>
<svg class="ab" style="left:0;top:0" width="1910" height="923" viewBox="0 0 1910 923"><rect x="285" y="533.5" width="110" height="33" rx="0.8" fill="none" stroke="#f75252" stroke-width="5"/><rect x="457" y="590.5" width="822" height="33" rx="0.8" fill="none" stroke="#f75252" stroke-width="5"/><polygon points="412,540 432,550.5 435,543.5 451.5,575 418.5,562.5 424,557.5" fill="#f75252"/><polygon points="119,869 121,869 237,419 305,168 312,170.5 308,136 288,164 295,166 232,419" fill="#f75252"/></svg>
</body></html>
